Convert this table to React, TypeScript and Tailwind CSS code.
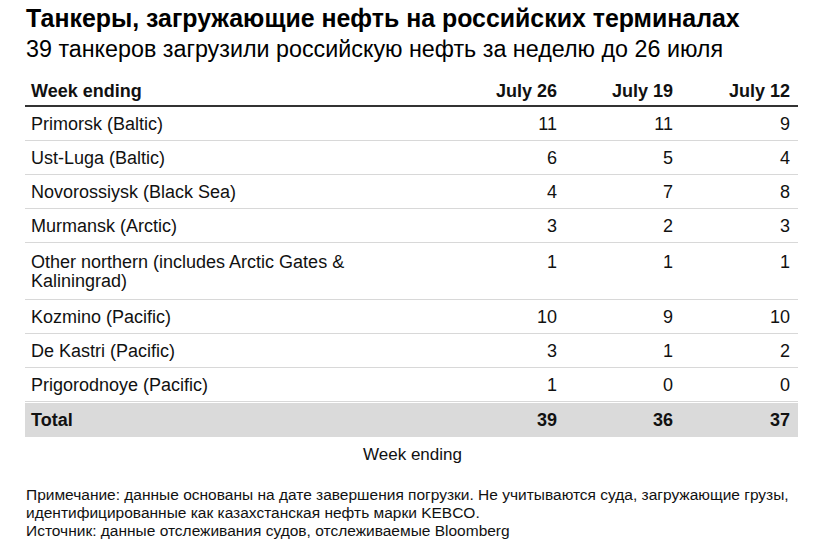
import React from "react";

const rows: [string, string, string, string][] = [
  ["Primorsk (Baltic)", "11", "11", "9"],
  ["Ust-Luga (Baltic)", "6", "5", "4"],
  ["Novorossiysk (Black Sea)", "4", "7", "8"],
  ["Murmansk (Arctic)", "3", "2", "3"],
  ["Other northern (includes Arctic Gates & Kaliningrad)", "1", "1", "1"],
  ["Kozmino (Pacific)", "10", "9", "10"],
  ["De Kastri (Pacific)", "3", "1", "2"],
  ["Prigorodnoye (Pacific)", "1", "0", "0"],
];

export default function App() {
  return (
    <div
      className="w-[824px] h-[554px] bg-white text-[#111] overflow-hidden pl-[26px] pr-[20px] pt-[3px]"
      style={{ fontFamily: '"Liberation Sans", Arial, sans-serif' }}
    >
      <div className="text-[24.9px] font-bold leading-[30px] text-black whitespace-nowrap">
        Танкеры, загружающие нефть на российских терминалах
      </div>
      <div className="text-[23.3px] leading-[32px] text-black whitespace-nowrap">
        39 танкеров загрузили российскую нефть за неделю до 26 июля
      </div>
      <div className="mt-[12px] w-[773px] -ml-[1px]">
        <div className="flex items-center h-[30px] border-b-2 border-[#333] text-[18px] font-bold">
          <div className="flex-1 pl-[6px]">Week ending</div>
          <div className="w-[116px] text-right">July 26</div>
          <div className="w-[116px] text-right">July 19</div>
          <div className="w-[125px] text-right pr-[8px]">July 12</div>
        </div>
        {rows.map((r, i) => (
          <div
            key={i}
            className={`flex items-start border-b border-[#d8d8d8] text-[18px] leading-[19px] ${
              i === 4 ? "h-[57px] pt-[10px]" : "h-[34px] pt-[8px]"
            }`}
          >
            <div className="flex-1 pl-[6px]">
              <div className="w-[345px]">{r[0]}</div>
            </div>
            <div className="w-[116px] text-right">{r[1]}</div>
            <div className="w-[116px] text-right">{r[2]}</div>
            <div className="w-[125px] text-right pr-[8px]">{r[3]}</div>
          </div>
        ))}
        <div className="flex items-center h-[34px] bg-[#dadada] text-[18px] font-bold mt-[1px]">
          <div className="flex-1 pl-[6px]">Total</div>
          <div className="w-[116px] text-right">39</div>
          <div className="w-[116px] text-right">36</div>
          <div className="w-[125px] text-right pr-[8px]">37</div>
        </div>
      </div>
      <div className="text-center text-[17px] mt-[6px] leading-[24px] w-[773px]">Week ending</div>
      <div className="mt-[19px] text-[15.5px] leading-[18px]">
        <div>
          Примечание: данные основаны на дате завершения погрузки. Не учитываются суда, загружающие грузы,
          идентифицированные как казахстанская нефть марки KEBCO.
        </div>
        <div>Источник: данные отслеживания судов, отслеживаемые Bloomberg</div>
      </div>
    </div>
  );
}
